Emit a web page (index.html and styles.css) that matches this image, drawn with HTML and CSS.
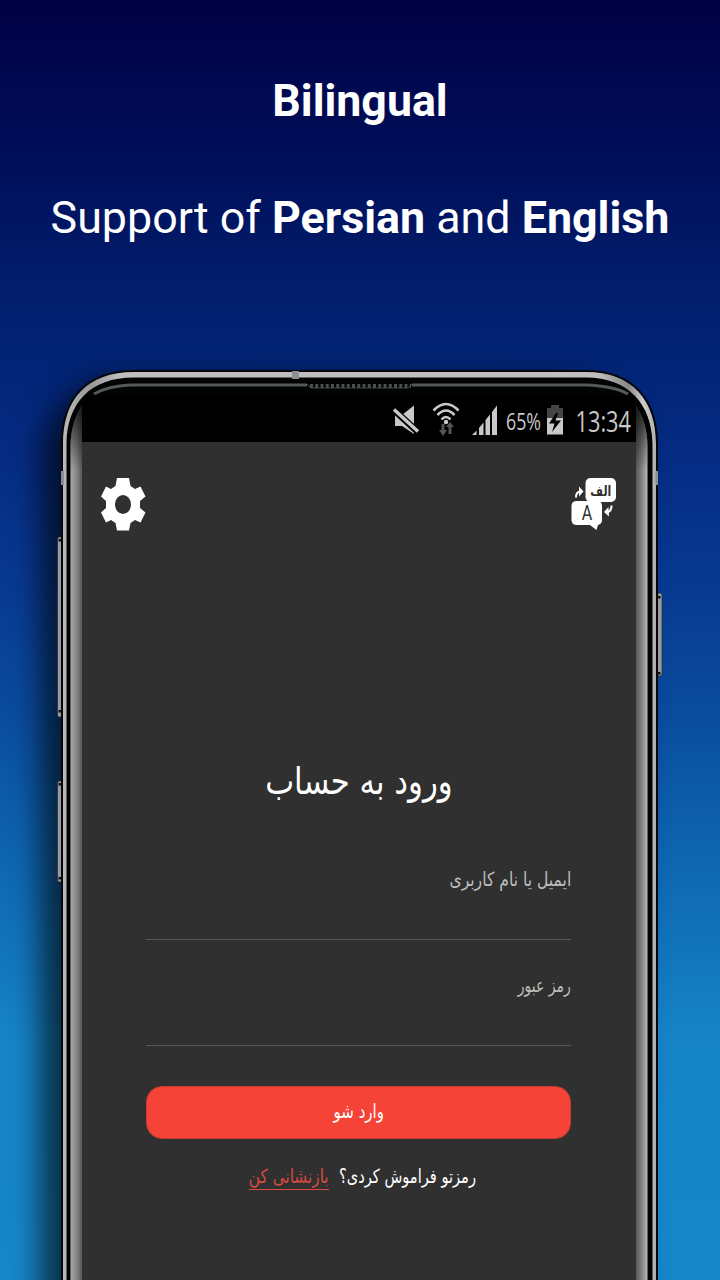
FILE: index.html
```html
<!DOCTYPE html>
<html lang="en">
<head>
<meta charset="utf-8">
<title>Bilingual</title>
<link rel="stylesheet" href="styles.css">
</head>
<body>
<main class="promo">
  <header class="headline">
    <h1>Bilingual</h1>
    <p>Support of <b>Persian</b> and <b>English</b></p>
  </header>
  <section class="phone">
    <div class="shadow"></div>
    <svg class="frame" viewBox="0 0 720 920" aria-hidden="true">
      <defs>
        <linearGradient id="edgeL"><stop offset="0" stop-color="#a7aaa9"/><stop offset=".45" stop-color="#838685"/><stop offset="1" stop-color="#484848"/></linearGradient>
        <linearGradient id="edgeR"><stop offset="0" stop-color="#484848"/><stop offset=".6" stop-color="#858585"/><stop offset="1" stop-color="#bbb"/></linearGradient>
        <linearGradient id="fade" x2="0" y2="1"><stop offset="0" stop-color="#000" stop-opacity=".8"/><stop offset="1" stop-color="#000" stop-opacity="0"/></linearGradient>
        <linearGradient id="rim" gradientUnits="userSpaceOnUse" x1="61" y1="0" x2="658" y2="0"><stop offset="0" stop-color="#bbb"/><stop offset=".05" stop-color="#999"/><stop offset=".1" stop-color="#c0bebe"/><stop offset=".9" stop-color="#c0bebe"/><stop offset=".95" stop-color="#888"/><stop offset=".975" stop-color="#ccc"/><stop offset="1" stop-color="#aaa"/></linearGradient>
      </defs>
      <g class="keys">
        <rect x="57.5" y="177" width="5" height="180" rx="2"/>
        <rect x="57.5" y="421" width="5" height="101" rx="2"/>
        <rect x="657.5" y="233" width="4.500" height="83" rx="2"/>
      </g>
      <path class="screws" d="M58.500 179h2.500v2.500h-2.500zM58.500 350h2.500v2.500h-2.500zM58.500 423h2.500v2.500h-2.500zM58.500 517h2.500v2.500h-2.500zM658 236h2.500v2.500h-2.500zM658 312h2.500v2.500h-2.500z"/>
      <path fill="#050607" d="M61 930V84C61 38 86 10 134 10H586C634 10 658 40 658 84V930Z"/>
      <path fill="url(#rim)" fill-rule="evenodd" d="M63 930V84C63 39 87 12 134 12H586C632 12 656 40 656 84V930H652.500V84C652 44 628 17.500 586 17.500H134C90 17.500 67 43 66.500 84V930Z"/>
      <path fill="#020303" d="M67 930V86C67 43 92 18 134 18H586C628 18 652 44 652 86V930Z"/>
      <path fill="none" stroke="#555958" stroke-width="3" d="M94 34Q108 26 130 25H307M412 25H586Q614 26 628 34"/>
      <path fill="none" stroke="#444747" stroke-width="1" d="M307 24L311 28H408L412 24"/>
      <path fill="none" stroke="#4b4f4f" stroke-width="4" stroke-dasharray="3 2.250" d="M310 26H411"/>
      <path fill="url(#edgeL)" d="M70.500 920V86Q71 60 84 43V920Z"/>
      <path fill="url(#edgeR)" d="M634 920V43Q647 60 647.500 86V920Z"/>
      <path fill="url(#fade)" d="M70.500 110V86Q71 60 84 43V110ZM634 110V43Q647 60 647.500 86V110Z"/>
      <path fill="#8b8f93" d="M292 11h7v8h-7zM61 111h3v14h-3zM655.500 111h2.500v14h-2.500z"/>
    </svg>
    <div class="screen">
      <div class="status">
        <svg viewBox="380 395 256 47" aria-hidden="true">
          <g fill="#c9c9c9">
            <path d="M395 415H402L414 405.500V434L402 426H395Z"/>
            <path d="M394 410L418 432" stroke="#000" stroke-width="6.500"/>
            <path d="M394 409.500L418 431.500" stroke="#c9c9c9" stroke-width="3.400"/>
            <g fill="none" stroke="#c9c9c9" stroke-width="2.600"><path d="M433.500 410.500Q446 397.500 458.500 410.500M437.500 415Q446 406 454.500 415M441.500 419.500Q446 414.500 450.500 419.500"/></g>
            <circle cx="446" cy="422" r="2.200"/>
            <path fill="#555" d="M441.500 424h3v6h2.500l-4 6-4-6h2.500zM448.500 434v-7h-2.500l4-5 4 5H451.500v7z"/>
            <path d="M472 435L476.500 430.500V435ZM479 428L483.500 422.500V435H479ZM485.500 420L490 414.500V435H485.500ZM492 412L497 405.500V435H492Z"/>
            <text class="digits" x="506" y="430" font-size="23" textLength="35" lengthAdjust="spacingAndGlyphs">65%</text>
            <path fill="#444" d="M547 408h4v-3h8v3h4v10h-16z"/>
            <path d="M547 418h16v16.500h-16z"/>
            <path fill="#000" d="M556 413L549 423.500H554.500L552 432L561 420.500H555.500L558 413Z"/>
            <text class="digits" x="575.500" y="432" font-size="30" textLength="55.500" lengthAdjust="spacingAndGlyphs">13:34</text>
          </g>
        </svg>
      </div>
      <nav class="tools">
        <svg class="gear" viewBox="0 0 46 54" aria-label="Settings"><path fill="#fff" fill-rule="evenodd" d="M17 1H29L30.500 9L35 12L40.500 9.500L45.500 19.500L40 24V31L45.500 35.500L40.500 45.500L35 43L30.500 46L29 53.500H17L15.500 46L11 43L6 45.500L1 35.500L6 31V24L1 19.500L6 9.500L11 12L15.500 9ZM23 18A8 9.500 0 1 0 23 37A8 9.500 0 1 0 23 18Z"/></svg>
        <svg class="lang" viewBox="571 477 46 54" aria-label="Language">
          <rect x="585.500" y="478" width="30.500" height="24" rx="5" fill="#fff"/>
          <path fill="#fff" d="M577 501H597Q602 501 602 506V520Q602 524 598 525L596.500 530L590 525H577Q571.500 525 571.500 520V506Q571.500 501 577 501Z"/>
          <text class="fa-glyph" x="600.800" y="496" text-anchor="middle" textLength="21" lengthAdjust="spacingAndGlyphs">الف</text>
          <text class="en-glyph" x="587" y="519.500" text-anchor="middle" textLength="10.500" lengthAdjust="spacingAndGlyphs">A</text>
          <g fill="none" stroke="#fff" stroke-width="2"><path d="M576 497.500Q576 492 580 491.500M611.500 505.500Q611.500 511 608 512"/></g>
          <path fill="#fff" d="M579 486.500L583.500 491.500L579 496.500ZM608.500 507L604 512L609 516.500Z"/>
        </svg>
      </nav>
      <form class="login" dir="rtl" lang="fa">
        <h2><span>ورود به حساب</span></h2>
        <div class="field"><label>ایمیل یا نام کاربری</label></div>
        <div class="field"><label>رمز عبور</label></div>
        <button type="button"><span>وارد شو</span></button>
        <p class="reset"><span class="ask">رمزتو فراموش کردی؟</span><a>بازنشانی کن</a></p>
      </form>
    </div>
  </section>
</main>
</body>
</html>
```

FILE: styles.css
```css
* { box-sizing: border-box; }
body { margin: 0; }
.promo {
  width: 720px; height: 1280px; overflow: hidden;
  background: linear-gradient(#000044 0, #000f5a 160px, #02206f 310px, #052c84 460px, #083a92 590px, #0a4d9f 720px, #0e66b1 860px, #1685c8 1045px, #1687c9 1280px);
  display: flex; flex-direction: column;
  font-family: Roboto, "Liberation Sans", sans-serif; color: #fff;
}
.headline { height: 360px; padding-top: 74px; text-align: center; white-space: nowrap; }
.headline h1 { margin: 0; font-size: 44.7px; line-height: 54px; font-weight: 700; }
.headline p { margin: 63px 0 0; font-size: 44.8px; line-height: 54px; }
.headline b { font-weight: 700; }
.phone { position: relative; height: 920px; padding: 35px 84px 0 82px; }
.shadow { position: absolute; left: 61px; top: 14px; width: 590px; height: 1000px; border-radius: 75px; box-shadow: -18px 8px 30px 2px rgba(0,0,0,.65); }
.frame { position: absolute; left: 0; top: 0; width: 720px; height: 920px; }
.keys rect { fill: #989a9b; stroke: #222; stroke-width: .6; }
.screws { fill: #111; }
.screen { position: relative; height: 885px; width: 554px; display: flex; flex-direction: column; }
.status { height: 47px; background: #000; border-radius: 14px 14px 0 0; display: flex; justify-content: flex-end; flex: none; }
.status svg { width: 256px; height: 47px; overflow: visible; }
.digits { font-family: "Open Sans", Roboto, sans-serif; }
.tools { background: #303030; height: 108px; padding: 35px 19px 0 18px; display: flex; justify-content: space-between; flex: none; }
.tools svg { width: 46px; height: 54px; }
.fa-glyph { font: bold 14px "DejaVu Sans", sans-serif; fill: #303030; }
.en-glyph { font: 20px Roboto, sans-serif; fill: #303030; }
.login { background: #303030; flex: 1; padding: 204px 65px 0 64px; font-family: "DejaVu Sans", sans-serif; white-space: nowrap; }
.login h2 { margin: 0; height: 64px; line-height: 56px; font-size: 37px; font-weight: 400; text-align: center; }
.login h2 span, .login label, .login button span, .ask, .reset a { display: inline-block; }
.login h2 span { transform: scaleX(.83); }
.field { height: 106px; border-bottom: 1px solid #585858; padding-top: 32px; color: #bdbdbd; font-size: 19.5px; line-height: 28px; }
.field:first-of-type { height: 122px; padding-top: 48px; }
.login label { transform: scaleX(.8); transform-origin: right; }
.field + .field label { transform: scaleX(.72); }
.login button { display: block; width: 100%; height: 53px; margin: 40px 0 0; padding: 0 0 3px; border: 1px solid #c43c33; border-radius: 16px; background: #f54337; color: #fff; font: 19.5px "DejaVu Sans", sans-serif; }
.login button span { transform: scaleX(.77); }
.reset { margin: 24px -56px 0 -24px; display: flex; justify-content: center; font-size: 19.5px; line-height: 28px; }
.ask { transform: scaleX(.75); transform-origin: left; }
.reset a { color: #d84a40; border-bottom: 1px solid #d84a40; height: 27px; margin-right: 10px; transform: scaleX(.785); transform-origin: right; }
```
